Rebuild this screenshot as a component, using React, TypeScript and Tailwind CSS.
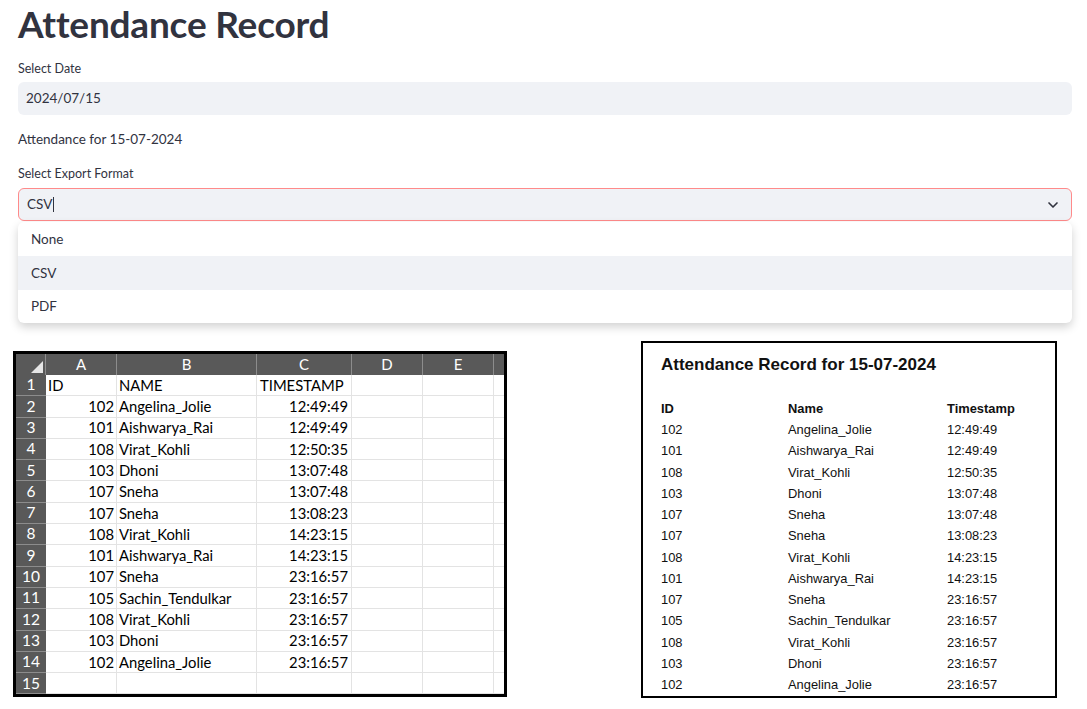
import { ChevronDown } from 'lucide-react';

const rows = [
  ['102', 'Angelina_Jolie', '12:49:49'],
  ['101', 'Aishwarya_Rai', '12:49:49'],
  ['108', 'Virat_Kohli', '12:50:35'],
  ['103', 'Dhoni', '13:07:48'],
  ['107', 'Sneha', '13:07:48'],
  ['107', 'Sneha', '13:08:23'],
  ['108', 'Virat_Kohli', '14:23:15'],
  ['101', 'Aishwarya_Rai', '14:23:15'],
  ['107', 'Sneha', '23:16:57'],
  ['105', 'Sachin_Tendulkar', '23:16:57'],
  ['108', 'Virat_Kohli', '23:16:57'],
  ['103', 'Dhoni', '23:16:57'],
  ['102', 'Angelina_Jolie', '23:16:57'],
];

const sans = "font-['Source_Sans_Pro','Lato',sans-serif]";

function Spreadsheet() {
  const cols = ['A', 'B', 'C', 'D', 'E'];
  const widths = ['w-[71px]', 'w-[140px]', 'w-[95px]', 'w-[71px]', 'w-[71px]'];
  const sheetRows: string[][] = [['ID', 'NAME', 'TIMESTAMP'], ...rows, ['', '', '']];

  return (
    <div className="border-[3px] border-black bg-white font-['Lato','Open_Sans',sans-serif] text-[14.8px] text-black leading-none">
      {/* column header */}
      <div className="flex h-[21px] bg-[#595959] text-white">
        <div className="w-[30px] border-r border-[#8c8c8c] flex items-end justify-end p-[2px]">
          <div className="w-0 h-0 border-l-[12px] border-l-transparent border-b-[12px] border-b-[#e6e6e6]" />
        </div>
        {cols.map((c, i) => (
          <div key={c} className={`${widths[i]} border-r border-[#8c8c8c] flex items-center justify-center text-[15px]`}>
            {c}
          </div>
        ))}
        <div className="flex-1" />
      </div>
      {sheetRows.map((r, i) => (
        <div key={i} className="flex h-[21.3px]">
          <div className="w-[30px] bg-[#595959] text-white border-b border-[#8c8c8c] flex items-center justify-center text-[15.5px]">
            {i + 1}
          </div>
          <div className={`${widths[0]} border-r border-b border-[#e3e3e3] flex items-center px-[2px] ${i === 0 ? 'justify-start' : 'justify-end'}`}>
            {r[0]}
          </div>
          <div className={`${widths[1]} border-r border-b border-[#e3e3e3] flex items-center px-[2px]`}>{r[1]}</div>
          <div className={`${widths[2]} border-r border-b border-[#e3e3e3] flex items-center px-[3px] ${i === 0 ? 'justify-start' : 'justify-end'}`}>
            {r[2]}
          </div>
          <div className={`${widths[3]} border-r border-b border-[#e3e3e3]`} />
          <div className={`${widths[4]} border-r border-b border-[#e3e3e3]`} />
          <div className="flex-1 border-b border-[#e3e3e3]" />
        </div>
      ))}
    </div>
  );
}

function PdfPreview() {
  return (
    <div className="w-[416px] h-[357px] border-2 border-black bg-white px-[18px] pt-[10px] font-['Liberation_Sans',Arial,sans-serif] text-[#111]">
      <h2 className="text-[17px] font-bold leading-[24px]">Attendance Record for 15-07-2024</h2>
      <div className="mt-[21px] text-[12.9px]">
        <div className="flex h-[21.25px] items-center font-bold">
          <div className="w-[127px]">ID</div>
          <div className="w-[159px]">Name</div>
          <div>Timestamp</div>
        </div>
        {rows.map((r, i) => (
          <div key={i} className="flex h-[21.25px] items-center">
            <div className="w-[127px]">{r[0]}</div>
            <div className="w-[159px]">{r[1]}</div>
            <div>{r[2]}</div>
          </div>
        ))}
      </div>
    </div>
  );
}

export default function App() {
  return (
    <div className="min-h-screen bg-white">
      <div className={`pl-[18px] pr-[15px] text-[#31333f] ${sans}`}>
        <h1 className="text-[37px] font-bold leading-[48px] tracking-[-0.2px]">Attendance Record</h1>

        <label className="block mt-[11px] text-[12.5px] leading-[20px]">Select Date</label>
        <div className="mt-[3px] h-[33px] rounded-md bg-[#f0f2f6] flex items-center px-[8px] text-[13.5px]">2024/07/15</div>

        <p className="mt-[14px] text-[13.5px] leading-[20px]">Attendance for 15-07-2024</p>

        <label className="block mt-[15px] text-[12.5px] leading-[20px]">Select Export Format</label>
        <div className="mt-[4px] h-[33px] rounded-md bg-[#f0f2f6] border border-[#ff8a8a] flex items-center justify-between pl-[8px] pr-[10px] text-[13.5px]">
          <span className="flex items-center">
            CSV<span className="ml-[1px] inline-block w-px h-[15px] bg-[#31333f]" />
          </span>
          <ChevronDown className="w-4 h-4 text-[#31333f]" strokeWidth={2.5} />
        </div>
        <div className="mt-px rounded-md bg-white shadow-[0_4px_10px_rgba(0,0,0,0.18)] text-[13.5px] overflow-hidden">
          <div className="h-[34px] flex items-center px-[13px]">None</div>
          <div className="h-[34px] flex items-center px-[13px] bg-[#f0f2f6]">CSV</div>
          <div className="h-[33px] flex items-center px-[13px]">PDF</div>
        </div>
      </div>

      <div className="flex items-start mt-[18px]">
        <div className="ml-[13px] mt-[10px] w-[494px]">
          <Spreadsheet />
        </div>
        <div className="ml-[134px]">
          <PdfPreview />
        </div>
      </div>
    </div>
  );
}
